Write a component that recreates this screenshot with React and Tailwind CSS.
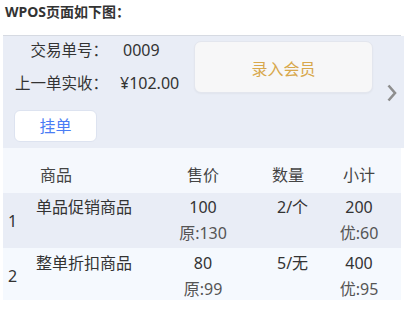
const font = { fontFamily: '"Noto Sans", "Noto Sans CJK SC", sans-serif' };

const rows = [
  { no: 1, name: "单品促销商品", price: "100", orig: "原:130", qty: "2/个", total: "200", off: "优:60", bg: "bg-[#e9edf6]", h: "h-[55px]", pt: "pt-[1px]" },
  { no: 2, name: "整单折扣商品", price: "80", orig: "原:99", qty: "5/无", total: "400", off: "优:95", bg: "bg-[#f5f9fe]", h: "h-[52px]", pt: "pt-[2px]" },
];

const ItemRow = ({ item }) => {
  return (
    <div className={"grid grid-cols-[30px_134px_72px_92px_56px_1fr] text-[16px] leading-[26px] text-[#333] " + item.bg + " " + item.h + " " + item.pt}>
      <div className="flex items-center pl-[5px] text-[16px]">{item.no}</div>
      <div className="pl-[3px]">{item.name}</div>
      <div className="flex flex-col items-center">
        <span>{item.price}</span>
        <span className="text-[#555]">{item.orig}</span>
      </div>
      <div className="pl-[38px]">{item.qty}</div>
      <div className="flex flex-col items-center">
        <span>{item.total}</span>
        <span className="text-[#555]">{item.off}</span>
      </div>
      <div></div>
    </div>
  );
};

const App = () => {
  return (
    <div className="w-[404px] h-[316px] bg-white overflow-hidden" style={font}>
      <div className="pl-[5px] pt-[2px] h-[35px] text-[14px] leading-[20px] font-bold text-[#333]">
        WPOS页面如下图：
      </div>
      <div className="ml-[3px] w-[398px] border-t border-[#d6dae2]">
        <div className="flex bg-[#e9edf6] h-[112px] w-[401px]">
          <div className="w-[191px] flex flex-col pt-[3px]">
            <div className="flex text-[15.5px] leading-[22px] text-[#333]">
              <span className="w-[105px] text-right">交易单号：</span>
              <span className="ml-[15px] text-[16px]">0009</span>
            </div>
            <div className="flex text-[15.5px] leading-[22px] text-[#333] mt-[11px]">
              <span className="w-[105px] text-right">上一单实收：</span>
              <span className="ml-[12px] text-[16px]">¥102.00</span>
            </div>
            <button
              type="button"
              className="ml-[11px] mt-[16px] w-[83px] h-[32px] bg-white rounded-[6px] border border-[#dde3f0] text-[16px] text-[#4a7df5]"
            >
              挂单
            </button>
          </div>
          <div className="pt-[5px]">
            <button
              type="button"
              className="w-[179px] h-[52px] bg-[#f7f7f8] rounded-[7px] border border-[#e3e6ee] shadow-[0_1px_2px_rgba(0,0,0,0.04)] text-[16px] text-[#d8a84c] pt-[3px]"
            >
              录入会员
            </button>
          </div>
          <div className="flex-1 flex items-center pl-[14px] pt-[2px]">
            <svg width="10" height="18" viewBox="0 0 10 18">
              <polyline points="1.5,1.5 8,9 1.5,16.5" fill="none" stroke="#8e8e8e" strokeWidth="2.6" />
            </svg>
          </div>
        </div>
        <div className="grid grid-cols-[30px_134px_72px_92px_56px_1fr] bg-[#f5f8fd] h-[45px] pt-[16px] text-[16px] leading-[22px] text-[#444]">
          <div></div>
          <div className="pl-[7px]">商品</div>
          <div className="text-center">售价</div>
          <div className="text-center pl-[6px]">数量</div>
          <div className="text-center">小计</div>
          <div></div>
        </div>
        {rows.map((item) => (
          <ItemRow key={item.no} item={item} />
        ))}
      </div>
    </div>
  );
};

export default App;
